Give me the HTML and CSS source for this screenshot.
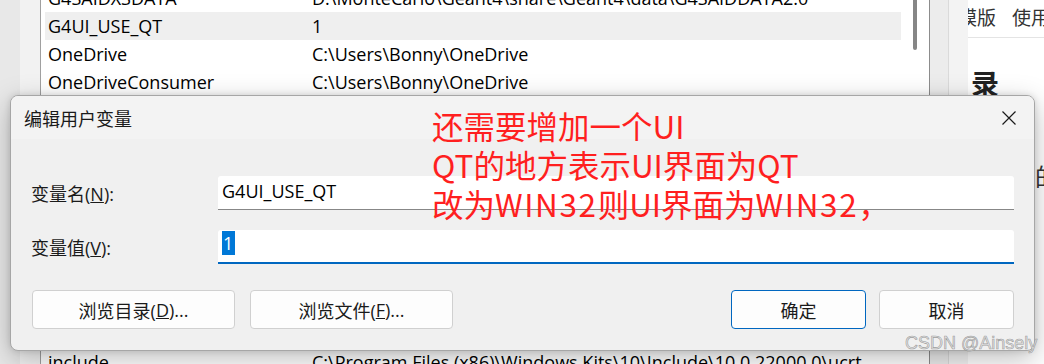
FILE: index.html
```html
<!DOCTYPE html>
<html lang="zh-CN">
<head>
    <meta charset="UTF-8">
    <meta name="viewport" content="width=device-width, initial-scale=1.0">
    <title>编辑用户变量</title>
    <link rel="stylesheet" href="styles.css">
</head>
<body>
    <div class="desktop">
        <div class="edge"></div>
        <div class="edge2"></div>
        <div class="list">
            <div class="row first"><span class="name">G4SAIDXSDATA</span><span class="value">D:\MonteCarlo\Geant4\share\Geant4\data\G4SAIDDATA2.0</span></div>
            <div class="row sel"><span class="name">G4UI_USE_QT</span><span class="value">1</span></div>
            <div class="row"><span class="name">OneDrive</span><span class="value">C:\Users\Bonny\OneDrive</span></div>
            <div class="row"><span class="name">OneDriveConsumer</span><span class="value">C:\Users\Bonny\OneDrive</span></div>
            <div class="row"><span class="name">Path</span><span class="value">C:\Users\Bonny\AppData\Local\Microsoft\WindowsApps;</span></div>
            <div class="row"><span class="name">TEMP</span><span class="value">C:\Users\Bonny\AppData\Local\Temp</span></div>
            <div class="row"><span class="name">TMP</span><span class="value">C:\Users\Bonny\AppData\Local\Temp</span></div>
            <div class="row"><span class="name">G4ENSDFSTATEDATA</span><span class="value">D:\MonteCarlo\Geant4\share\Geant4\data\G4ENSDFSTATE2.3</span></div>
            <div class="row"><span class="name">G4INCLDATA</span><span class="value">D:\MonteCarlo\Geant4\share\Geant4\data\G4INCL1.0</span></div>
            <div class="row"><span class="name">G4LEDATA</span><span class="value">D:\MonteCarlo\Geant4\share\Geant4\data\G4EMLOW8.0</span></div>
            <div class="row"><span class="name">G4LEVELGAMMADATA</span><span class="value">D:\MonteCarlo\Geant4\share\Geant4\data\PhotonEvaporation5.7</span></div>
            <div class="row"><span class="name">G4NEUTRONHPDATA</span><span class="value">D:\MonteCarlo\Geant4\share\Geant4\data\G4NDL4.6</span></div>
            <div class="row"><span class="name">G4PARTICLEXSDATA</span><span class="value">D:\MonteCarlo\Geant4\share\Geant4\data\G4PARTICLEXS3.1.1</span></div>
            <div class="row"><span class="name">include</span><span class="value">C:\Program Files (x86)\Windows Kits\10\Include\10.0.22000.0\ucrt...</span></div>
        </div>
        <div class="scroll"><div class="thumb"></div></div>
        <div class="split"></div>
        <div class="pane"></div>
        <div class="pane2"></div>
        <div class="web">
            <div class="tabs"><span>模版</span><span>使用</span></div>
            <div class="heading">录</div>
            <div class="para">的</div>
        </div>
    </div>

    <div class="dialog">
        <div class="titlebar">
            <span class="title">编辑用户变量</span>
            <svg class="close" width="14" height="14" viewBox="0 0 14 14">
                <path d="M0.5 0.5 L13.5 13.5 M13.5 0.5 L0.5 13.5" stroke="#1a1a1a" stroke-width="1.2" fill="none"/>
            </svg>
        </div>
        <div class="body">
            <div class="fields">
                <label class="label">变量名(<u>N</u>):</label>
                <div class="input">G4UI_USE_QT</div>
                <label class="label">变量值(<u>V</u>):</label>
                <div class="input focus"><span class="selected">1</span></div>
            </div>
            <div class="buttons">
                <div class="group">
                    <div class="btn wide">浏览目录(<u>D</u>)...</div>
                    <div class="btn wide">浏览文件(<u>F</u>)...</div>
                </div>
                <div class="group tight">
                    <div class="btn small primary">确定</div>
                    <div class="btn small">取消</div>
                </div>
            </div>
        </div>
    </div>

    <div class="note">还需要增加一个UI<br>QT的地方表示UI界面为QT<br>改为<span class="latin">WIN32</span>则UI界面为<span class="latin">WIN32</span>，</div>

    <div class="watermark">CSDN @Ainsely</div>
</body>
</html>
```

FILE: styles.css
```css
* {
    box-sizing: border-box;
}
body {
    margin: 0;
    width: 1044px;
    height: 364px;
    overflow: hidden;
    position: relative;
    font-family: "Open Sans", "Noto Sans CJK SC", sans-serif;
    font-size: 18px;
    color: #000;
    background: #f0f0f0;
}

/* background window */
.desktop {
    display: flex;
    height: 364px;
}
.edge {
    width: 20px;
    background: #e8e8e8;
}
.edge2 {
    width: 21px;
    background: #f2f2f2;
    border-right: 1px solid #a0a0a0;
}
.list {
    width: 864px;
    background: #fff;
    padding: 0 4px;
    overflow: hidden;
}
.row {
    display: flex;
    align-items: center;
    height: 28px;
    padding-left: 3px;
    white-space: nowrap;
}
.row.first {
    margin-top: -16px;
}
.row.sel {
    background: #efefef;
}
.name {
    width: 264px;
    flex-shrink: 0;
}
.scroll {
    width: 24px;
    background: #fff;
}
.thumb {
    margin: -10px 0 0 8px;
    width: 4px;
    height: 60px;
    border-radius: 2px;
    background: #868686;
}
.split {
    width: 1px;
    background: #8c8c8c;
}
.pane {
    width: 19px;
    background: #ececec;
    border-right: 1px solid #dadada;
}
.pane2 {
    width: 19px;
    background: #f3f3f3;
}
.web {
    flex: 1;
    background: #fff;
    overflow: hidden;
    white-space: nowrap;
}
.tabs {
    height: 38px;
    display: flex;
    align-items: center;
    gap: 16px;
    margin-left: -10px;
    padding-bottom: 4px;
    border-bottom: 1px solid #e4e4e4;
    font-family: "Noto Sans CJK SC", sans-serif;
    font-size: 19px;
    color: #333;
}
.heading {
    margin-top: 28px;
    padding-left: 3px;
    font-family: "Noto Sans CJK SC", sans-serif;
    font-weight: bold;
    font-size: 28px;
    line-height: 34px;
    color: #222;
}
.para {
    margin-top: 62px;
    padding-left: 67px;
    font-family: "Noto Sans CJK SC", sans-serif;
    font-size: 24px;
    line-height: 28px;
    color: #333;
}

/* dialog */
.dialog {
    position: absolute;
    left: 10px;
    top: 95px;
    width: 1025px;
    height: 256px;
    background: #f0f0f0;
    border: 1px solid #a6a6a6;
    border-radius: 8px;
    box-shadow: 0 8px 28px rgba(0, 0, 0, 0.26), 0 0 6px rgba(0, 0, 0, 0.12);
    overflow: hidden;
    display: flex;
    flex-direction: column;
}
.titlebar {
    height: 43px;
    background: #f3f3f3;
    display: flex;
    align-items: center;
    justify-content: space-between;
    padding: 0 18px 0 13px;
}
.title {
    font-size: 18px;
    color: #1a1a1a;
}
.body {
    padding: 37px 20px 21px 20px;
}
.fields {
    display: grid;
    grid-template-columns: 187px 796px;
    grid-auto-rows: 34px;
    row-gap: 20px;
    align-items: center;
}
.label {
    font-size: 18px;
    color: #1a1a1a;
}
.input {
    height: 34px;
    background: #fff;
    border-bottom: 1px solid #878787;
    border-radius: 3px 3px 0 0;
    padding: 0 4px 3px;
    display: flex;
    align-items: center;
    font-size: 18px;
}
.input.focus {
    border-bottom: 2px solid #0067c0;
    align-items: flex-start;
    padding-top: 1px;
}
.selected {
    display: inline-block;
    line-height: 24px;
    padding: 0 2px 0 1px;
    background: #0078d7;
    color: #fff;
}
.buttons {
    margin-top: 26px;
    display: flex;
    justify-content: space-between;
    padding-left: 1px;
}
.group {
    display: flex;
    gap: 15px;
}
.group.tight {
    gap: 13px;
}
.btn {
    height: 39px;
    display: flex;
    align-items: center;
    justify-content: center;
    background: #fdfdfd;
    border: 1px solid #d0d0d0;
    border-radius: 4px;
    font-size: 18px;
    color: #1a1a1a;
}
.btn.wide {
    width: 203px;
}
.btn.small {
    width: 135px;
}
.btn.primary {
    border-color: #0067c0;
}

/* overlays on the screenshot */
.note {
    position: absolute;
    left: 432px;
    top: 106px;
    font-family: "Noto Sans CJK SC", sans-serif;
    font-size: 31.5px;
    line-height: 39px;
    color: #ff1f1f;
    white-space: nowrap;
}
.note .latin {
    letter-spacing: 1.6px;
}
.watermark {
    position: absolute;
    left: 905px;
    top: 333px;
    font-family: "Liberation Sans", sans-serif;
    font-size: 18px;
    line-height: 20px;
    color: rgba(225, 225, 225, 0.85);
    -webkit-text-stroke: 0.6px rgba(120, 120, 120, 0.7);
    white-space: nowrap;
}
```
